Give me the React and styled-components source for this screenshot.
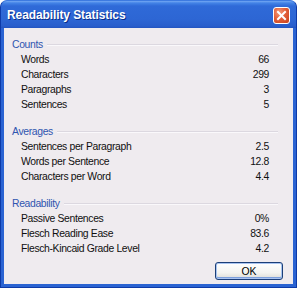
import React from 'react';
import styled, { createGlobalStyle } from 'styled-components';

const Global = createGlobalStyle`
  html, body { margin: 0; padding: 0; background: #ffffff; }
  #root { width: 297px; height: 288px; }
`

const Window = styled.div`
  width: 297px;
  height: 288px;
  box-sizing: border-box;
  display: flex;
  flex-direction: column;
  background: #2a63d2;
  border: 1px solid #0d3aa8;
  border-top-color: #3d7ae0;
  border-radius: 7px 7px 0 0;
  overflow: hidden;
  font-family: "Liberation Sans", Arial, sans-serif;
`
const TitleBar = styled.div`
  height: 27px;
  flex: none;
  display: flex;
  align-items: center;
  justify-content: space-between;
  padding: 0 6px 0 6px;
  background: linear-gradient(to bottom, #74a8f3 0px, #4383e6 2px, #2f6ad8 5px, #2d66d4 18px, #295ecc 25px, #2254c0 27px);
`
const Title = styled.span`
  color: #ffffff;
  font-weight: bold;
  font-size: 12px;
  text-shadow: 1px 1px 0 #0a2f8a;
  letter-spacing: -0.1px;
`
const Close = styled.div`
  width: 15px;
  height: 15px;
  border: 1px solid #ffffff;
  border-radius: 3px;
  background: radial-gradient(circle at 35% 30%, #f49a7a 0%, #e2603a 45%, #c8401c 100%);
  display: flex;
  align-items: center;
  justify-content: center;
  margin-top: 1px;
`
const Body = styled.div`
  flex: 1;
  margin: 0 3px 3px 3px;
  background: #efebef;
  padding: 9px 0 0 8px;
  display: flex;
  flex-direction: column;
  font-size: 10.4px;
  letter-spacing: -0.35px;
  color: #101010;
`
const Section = styled.div`
  margin-bottom: ${(p) => (p.$last ? '0' : '12px')};
`
const Header = styled.div`
  display: flex;
  align-items: center;
  gap: 4px;
  height: 15px;
  color: #2f55b0;
  margin-right: 15px;
  &::after {
    content: '';
    flex: 1;
    height: 1px;
    background: #dcd8e0;
    border-bottom: 1px solid #faf8fb;
  }
`
const Row = styled.div`
  display: flex;
  justify-content: space-between;
  height: 15px;
  line-height: 15px;
  padding-left: 9px;
  margin-right: 24px;
`
const Footer = styled.div`
  margin-top: auto;
  display: flex;
  justify-content: flex-end;
  padding: 0 10px 4px 0;
`
const Button = styled.button`
  width: 68px;
  height: 18px;
  box-sizing: border-box;
  border: 1px solid #1c3f78;
  border-radius: 3px;
  background: linear-gradient(to bottom, #ffffff 0%, #f4f4f0 60%, #dcdcd6 100%);
  box-shadow: inset 0 0 0 1px #a9c4f0, inset 0 -1px 0 1px #7da0dc;
  font-family: "Liberation Sans", Arial, sans-serif;
  font-size: 10.4px;
  color: #000000;
  padding: 0;
`

const data = [
  { title: 'Counts', rows: [['Words', '66'], ['Characters', '299'], ['Paragraphs', '3'], ['Sentences', '5']] },
  { title: 'Averages', rows: [['Sentences per Paragraph', '2.5'], ['Words per Sentence', '12.8'], ['Characters per Word', '4.4']] },
  { title: 'Readability', rows: [['Passive Sentences', '0%'], ['Flesch Reading Ease', '83.6'], ['Flesch-Kincaid Grade Level', '4.2']] },
]

const App = () => {
  return (
    <>
      <Global />
      <Window>
        <TitleBar>
          <Title>Readability Statistics</Title>
          <Close>
            <svg width="11" height="11" viewBox="0 0 11 11">
              <path d="M2 2 L9 9 M9 2 L2 9" stroke="#ffffff" strokeWidth="2" strokeLinecap="square" />
            </svg>
          </Close>
        </TitleBar>
        <Body>
          {data.map((s, i) => (
            <Section key={s.title} $last={i === data.length - 1}>
              <Header>{s.title}</Header>
              {s.rows.map((r) => (
                <Row key={r[0]}>
                  <span>{r[0]}</span>
                  <span>{r[1]}</span>
                </Row>
              ))}
            </Section>
          ))}
          <Footer>
            <Button>OK</Button>
          </Footer>
        </Body>
      </Window>
    </>
  )
}

export default App
